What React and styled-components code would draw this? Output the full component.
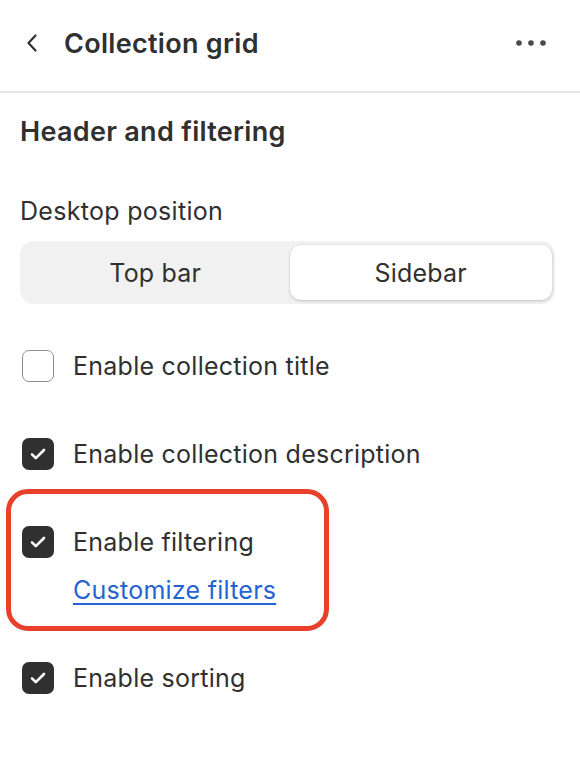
import React from 'react';
import styled, { createGlobalStyle } from 'styled-components';

const Global = createGlobalStyle`
  body {
    margin: 0;
    background: #ffffff;
    font-family: Inter, "Noto Sans", sans-serif;
    color: #303030;
  }
`;

const Page = styled.div`
  width: 580px;
  height: 760px;
  background: #fff;
  overflow: hidden;
`;

const TopBar = styled.header`
  height: 86px;
  display: flex;
  align-items: center;
  padding: 0 34px 5px 20px;
  border-bottom: 2px solid #e6e6e6;
  box-sizing: content-box;
`;

const BackButton = styled.button`
  border: 0;
  background: none;
  padding: 0;
  width: 24px;
  height: 24px;
  display: flex;
  align-items: center;
  justify-content: center;
  color: #303030;
  margin-right: 20px;
`;

const Title = styled.h1`
  flex: 1;
  margin: 0;
  font-size: 27px;
  font-weight: 600;
  letter-spacing: 0.3px;
  color: #303030;
`;

const MoreButton = styled.button`
  border: 0;
  background: none;
  padding: 0;
  display: flex;
  color: #4a4a4a;
`;

const Body = styled.div`
  padding: 21px 20px 0 20px;
  display: flex;
  flex-direction: column;
`;

const SectionTitle = styled.h2`
  margin: 0;
  font-size: 27px;
  line-height: 36px;
  font-weight: 600;
  letter-spacing: 0.3px;
  color: #303030;
`;

const FieldLabel = styled.div`
  margin-top: 46px;
  font-size: 25px;
  line-height: 30px;
  letter-spacing: 0.3px;
  color: #303030;
`;

const Segmented = styled.div`
  margin-top: 15px;
  height: 63px;
  width: 535px;
  box-sizing: border-box;
  background: #f1f1f1;
  border-radius: 14px;
  padding: 4px 3px 4px 4px;
  display: grid;
  grid-template-columns: 1fr 1fr;
  gap: 3px;
`;

const Segment = styled.button`
  border: 0;
  border-radius: 11px;
  font-family: inherit;
  font-size: 25px;
  letter-spacing: 0.2px;
  color: #303030;
  background: ${p => (p.$active ? '#ffffff' : 'transparent')};
  box-shadow: ${p => (p.$active ? '0 1px 3px rgba(0,0,0,0.18), 0 0 0 0.5px rgba(0,0,0,0.05)' : 'none')};
`;

const Options = styled.div`
  margin-top: 46px;
  display: flex;
  flex-direction: column;
  gap: 56px;
`;

const Group = styled.div`
  position: relative;
  display: flex;
  flex-direction: column;
  gap: 16px;
`;

const Highlight = styled.div`
  position: absolute;
  left: -14px;
  top: -37px;
  width: 323px;
  height: 142px;
  box-sizing: border-box;
  border: 5.5px solid #e8402a;
  border-radius: 22px;
  pointer-events: none;
`;

const Row = styled.label`
  display: flex;
  align-items: center;
  gap: 19px;
  height: 32px;
  padding-left: 2px;
  font-size: 25px;
  letter-spacing: 0.25px;
  color: #303030;
`;

const Box = styled.span`
  width: 32px;
  height: 32px;
  box-sizing: border-box;
  border-radius: 7px;
  flex: none;
  display: flex;
  align-items: center;
  justify-content: center;
  background: ${p => (p.$checked ? '#303030' : '#fff')};
  border: ${p => (p.$checked ? 'none' : '1.5px solid #8f8f8f')};
`;

const Link = styled.a`
  display: block;
  margin-left: 53px;
  line-height: 32px;
  font-size: 25px;
  letter-spacing: 0.25px;
  color: #2463d1;
  text-decoration: underline;
  text-underline-offset: 4px;
  text-decoration-thickness: 1.5px;
`;

function Checkbox({ label, checked }) {
  return (
    <Row>
      <Box $checked={checked}>
        {checked && (
          <svg width="20" height="20" viewBox="0 0 20 20" fill="none">
            <path d="M4 10.4l3.8 3.7L16 6" stroke="#fff" strokeWidth="2.6" strokeLinecap="round" strokeLinejoin="round" />
          </svg>
        )}
      </Box>
      {label}
    </Row>
  );
}

export default function App() {
  return (
    <Page>
      <Global />
      <TopBar>
        <BackButton aria-label="Back">
          <svg width="14" height="20" viewBox="0 0 14 20" fill="none">
            <path d="M10.5 2.5L3.5 10l7 7.5" stroke="#303030" strokeWidth="2.2" strokeLinecap="round" strokeLinejoin="round" />
          </svg>
        </BackButton>
        <Title>Collection grid</Title>
        <MoreButton aria-label="More">
          <svg width="30" height="8" viewBox="0 0 30 8">
            <circle cx="3" cy="4" r="2.8" fill="#4a4a4a" />
            <circle cx="15" cy="4" r="2.8" fill="#4a4a4a" />
            <circle cx="27" cy="4" r="2.8" fill="#4a4a4a" />
          </svg>
        </MoreButton>
      </TopBar>
      <Body>
        <SectionTitle>Header and filtering</SectionTitle>
        <FieldLabel>Desktop position</FieldLabel>
        <Segmented>
          <Segment>Top bar</Segment>
          <Segment $active>Sidebar</Segment>
        </Segmented>
        <Options>
          <Checkbox label="Enable collection title" />
          <Checkbox label="Enable collection description" checked />
          <Group>
            <Highlight />
            <Checkbox label="Enable filtering" checked />
            <Link href="#">Customize filters</Link>
          </Group>
          <Checkbox label="Enable sorting" checked />
        </Options>
      </Body>
    </Page>
  );
}
